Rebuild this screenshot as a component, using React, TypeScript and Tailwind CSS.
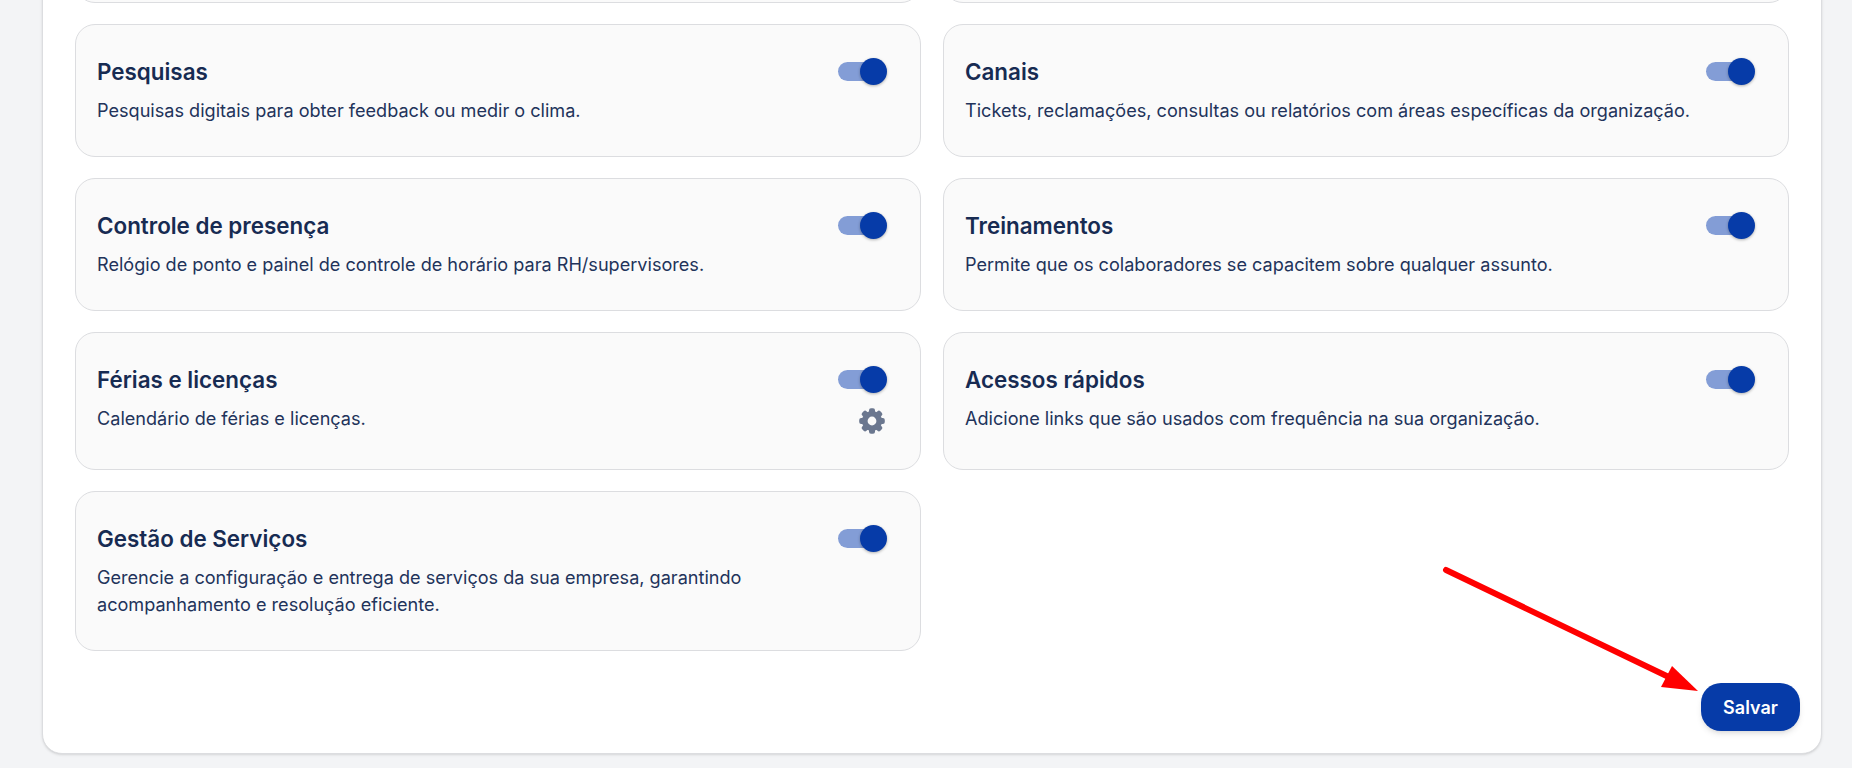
type Item = { title: string; text: string; gear?: boolean };

const rows: { cls: string; items: Item[] }[] = [
  {
    cls: 'h-[133px]',
    items: [
      { title: 'Pesquisas', text: 'Pesquisas digitais para obter feedback ou medir o clima.' },
      { title: 'Canais', text: 'Tickets, reclamações, consultas ou relatórios com áreas específicas da organização.' },
    ],
  },
  {
    cls: 'h-[133px]',
    items: [
      { title: 'Controle de presença', text: 'Relógio de ponto e painel de controle de horário para RH/supervisores.' },
      { title: 'Treinamentos', text: 'Permite que os colaboradores se capacitem sobre qualquer assunto.' },
    ],
  },
  {
    cls: 'h-[138px]',
    items: [
      { title: 'Férias e licenças', text: 'Calendário de férias e licenças.', gear: true },
      { title: 'Acessos rápidos', text: 'Adicione links que são usados com frequência na sua organização.' },
    ],
  },
  {
    cls: 'h-[160px]',
    items: [
      {
        title: 'Gestão de Serviços',
        text: 'Gerencie a configuração e entrega de serviços da sua empresa, garantindo acompanhamento e resolução eficiente.',
      },
    ],
  },
];

function Toggle() {
  return (
    <div className="relative ml-[1px] h-[19px] w-[41px] rounded-full bg-[#839dd6]">
      <span className="absolute -top-[4px] left-[22px] h-[27px] w-[27px] rounded-full bg-[#063ba8] shadow-[0_1px_3px_rgba(0,0,0,0.3)]" />
    </div>
  );
}

function Gear() {
  const teeth = [0, 45, 90, 135, 180, 225, 270, 315];
  return (
    <svg className="ml-[22px] mt-[19px] text-[#6b778f]" width="26" height="26" viewBox="0 0 26 26" fill="currentColor">
      {teeth.map((deg) => (
        <rect key={deg} x="10" y="0.2" width="6" height="7" rx="2" transform={`rotate(${deg} 13 13)`} />
      ))}
      <path
        fillRule="evenodd"
        d="M13 2.9a10.1 10.1 0 1 0 0 20.2a10.1 10.1 0 1 0 0-20.2zM13 8.6a4.4 4.4 0 1 1 0 8.8a4.4 4.4 0 1 1 0-8.8z"
      />
    </svg>
  );
}

function ModuleCard({ item, cls }: { item: Item; cls: string }) {
  return (
    <div className={`${cls} flex justify-between rounded-[20px] border border-[#dcdde0] bg-[#fafafa] pl-[21px] pr-[33px] pt-[32px]`}>
      <div className="max-w-[735px]">
        <h3 className="text-[22.4px] font-semibold leading-[30px] text-[#172b52]">{item.title}</h3>
        <p className="mt-[10px] text-[18.1px] leading-[27px] text-[#22335a]">{item.text}</p>
      </div>
      <div className="-mt-[2px] flex w-[50px] shrink-0 flex-col items-start pt-[7px]">
        <Toggle />
        {item.gear && <Gear />}
      </div>
    </div>
  );
}

export default function App() {
  return (
    <div className="relative h-[768px] overflow-hidden bg-[#f3f4f6] font-['Inter',sans-serif]">
      <div className="ml-[42px] mr-[30px] -mt-[40px] h-[794px] rounded-b-[20px] border border-[#dcdde0] bg-white px-[32px] shadow-sm">
        <div className="grid grid-cols-2 gap-x-[22px] gap-y-[21px]">
          <div className="h-[42px] rounded-[20px] border border-[#dcdde0] bg-[#fafafa]" />
          <div className="h-[42px] rounded-[20px] border border-[#dcdde0] bg-[#fafafa]" />
          {rows.map((row) =>
            row.items.map((item) => <ModuleCard key={item.title} item={item} cls={row.cls} />),
          )}
        </div>
        <div className="mt-[32px] flex justify-end">
          <button className="-mr-[11px] h-[48px] w-[99px] rounded-[20px] bg-[#063ba8] text-[18px] font-semibold text-white shadow-md">
            Salvar
          </button>
        </div>
      </div>
      <svg className="pointer-events-none absolute left-0 top-0" width="1852" height="768">
        <line x1="1446" y1="570" x2="1675" y2="680" stroke="#ff0000" strokeWidth="6" strokeLinecap="round" />
        <polygon points="1672,666 1698,691 1661,687" fill="#ff0000" />
      </svg>
    </div>
  );
}
